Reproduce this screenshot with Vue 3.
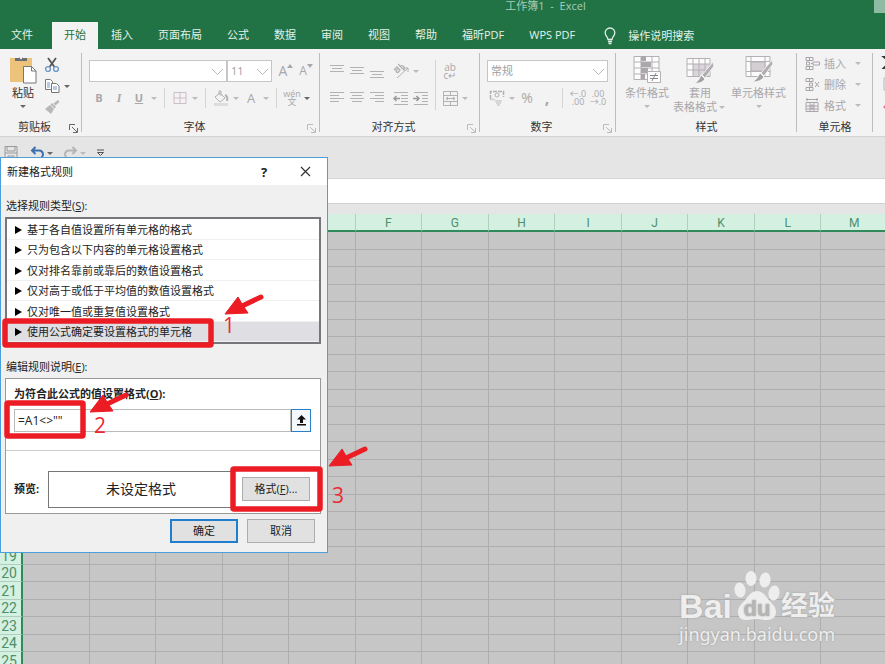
<template>
  <div class="excel">
    <header class="header">
      <div class="titlebar">
        <span class="title">工作簿1 &nbsp;- &nbsp;Excel</span>
        <span class="account"></span>
      </div>
      <nav class="tabs">
        <button
          v-for="tab in tabs"
          :key="tab"
          class="tab"
          :class="{ active: tab === activeTab, file: tab === '文件' }"
          @click="activeTab = tab"
        >{{ tab }}</button>
        <button class="tell-me">
          <svg width="12" height="18" viewBox="0 0 12 18" fill="none" stroke="#e4f1e9" stroke-width="1.3">
            <path d="M4 12.5C4 10 1.2 9.2 1.2 5.8a4.8 4.8 0 0 1 9.6 0C10.8 9.2 8 10 8 12.5zM4 14.5h4M4.5 16.5h3" />
          </svg>
          <span>操作说明搜索</span>
        </button>
      </nav>
    </header>

    <section class="ribbon">
      <div class="group clipboard">
        <div class="group-body">
          <button class="big dark">
            <svg width="28" height="29" viewBox="0 0 28 29">
              <rect x="1" y="3" width="22" height="24" fill="#edc37b" />
              <path d="M6 6V3h4a2.5 2.5 0 0 1 4 0h4v3z" fill="#6a6d74" />
              <circle cx="12" cy="3" r="1.2" fill="#f3f3f3" />
              <path d="M14.5 11.5h8l4.500 4.500v12H14.5z" fill="#fff" stroke="#777" />
              <path d="M22.5 11.5V16H27" fill="none" stroke="#777" />
            </svg>
            <span>粘贴</span>
            <i class="caret dark"></i>
          </button>
          <div class="stack">
            <button class="tool" aria-label="剪切">
              <svg width="16" height="16" viewBox="0 0 16 16" fill="none">
                <path d="M4 1l6.5 9M12 1L5.5 10" stroke="#555" stroke-width="1.8" />
                <circle cx="4" cy="12" r="2.4" stroke="#6f98c8" stroke-width="1.4" />
                <circle cx="12" cy="12" r="2.4" stroke="#6f98c8" stroke-width="1.4" />
              </svg>
            </button>
            <div class="row">
              <button class="tool" aria-label="复制">
                <svg width="16" height="16" viewBox="0 0 16 16" fill="#fff" stroke="#777">
                  <path d="M1.5 1.5h5l2 2v8h-7z" />
                  <path d="M7.5 5.5h5l2.5 2.5v6.5H7.5z" />
                  <path d="M3 5h3M3 7h3M3 9h3M9 9h4M9 11h4" stroke="#6f98c8" />
                </svg>
              </button>
              <i class="caret dark"></i>
            </div>
            <button class="tool" aria-label="格式刷">
              <svg width="16" height="16" viewBox="0 0 16 16">
                <path d="M14 1l1.5 2-4 3.500-2-2zM8 4l4 4-1.500 1.500-4-4zM6 6l4 4-3 5-6-5z" fill="#b9b7b9" />
              </svg>
            </button>
          </div>
        </div>
        <div class="group-title"><span>剪贴板</span><Launcher class="launcher on" /></div>
      </div>

      <div class="group font">
        <div class="group-body rows">
          <div class="row">
            <label class="combo family">
              <select aria-label="字体"><option></option></select>
              <svg class="chevron" width="13" height="8" viewBox="0 0 13 8"><path d="M1 1l5.5 5.500L12 1" /></svg>
            </label>
            <label class="combo size">
              <select aria-label="字号"><option>11</option></select>
              <svg class="chevron" width="13" height="8" viewBox="0 0 13 8"><path d="M1 1l5.5 5.500L12 1" /></svg>
            </label>
            <button class="tool grow">A<svg width="6" height="5" viewBox="0 0 6 5"><path d="M3 0l3 4H0z" /></svg></button>
            <button class="tool shrink">A<svg width="6" height="5" viewBox="0 0 6 5"><path d="M3 4L0 0h6z" /></svg></button>
          </div>
          <div class="row">
            <button class="tool"><b>B</b></button>
            <button class="tool italic">I</button>
            <button class="tool"><b><u>U</u></b></button>
            <i class="caret"></i>
            <i class="split"></i>
            <button class="tool" aria-label="边框">
              <svg class="line" width="14" height="14" viewBox="0 0 14 14"><path d="M1 1.5h12v11H1zM7 1v12M1 7h12" stroke="#cdbccb" /></svg>
            </button>
            <i class="caret"></i>
            <i class="split"></i>
            <button class="tool" aria-label="填充颜色">
              <svg class="line" width="16" height="16" viewBox="0 0 16 16">
                <path d="M2 7l5-4 5 5-5 4zM6 5V1h2v5" />
                <path d="M12 5q3 1 2 6" stroke-width="2" />
                <path d="M1 14.5h14" stroke="#dedcde" stroke-width="3" />
              </svg>
            </button>
            <i class="caret"></i>
            <button class="tool color">A</button>
            <i class="caret"></i>
            <i class="split"></i>
            <button class="tool pinyin"><span>wén</span><span>文</span></button>
            <i class="caret dark"></i>
          </div>
        </div>
        <div class="group-title"><span>字体</span><Launcher class="launcher" /></div>
      </div>

      <div class="group align">
        <div class="group-body">
          <div class="rows">
            <div class="row">
              <button v-for="(d, i) in vAligns" :key="i" class="tool">
                <svg class="line" width="14" height="18" viewBox="0 0 14 18"><path :d="d" /></svg>
              </button>
              <button class="tool gap" aria-label="方向">
                <svg class="line" width="16" height="16" viewBox="0 0 16 16">
                  <path d="M4 15L15 5M11 5h4v4" />
                  <path d="M1 7l3-3 3 3-2 2.500q-2 0-2-2l2-2M5 1l6 6q1-3-1-4t-3 1" stroke-width="1.3" />
                </svg>
              </button>
              <i class="caret"></i>
            </div>
            <div class="row">
              <button v-for="(d, i) in hAligns" :key="i" class="tool">
                <svg class="line" width="14" height="14" viewBox="0 0 14 14"><path :d="d" /></svg>
              </button>
              <button class="tool gap" aria-label="减少缩进">
                <svg class="line" width="16" height="14" viewBox="0 0 16 14"><path d="M1 1.5h14M8 4.5h7M8 7.5h7M8 10.5h7M1 13.5h14" /><path d="M7 7.5H1M3.5 5L1 7.5 3.5 10" stroke="#999" stroke-width="1.5" /></svg>
              </button>
              <button class="tool" aria-label="增加缩进">
                <svg class="line" width="16" height="14" viewBox="0 0 16 14"><path d="M1 1.5h14M9 4.5h6M9 7.5h6M9 10.5h6M1 13.5h14" /><path d="M0 7.5h6M3.5 5L6 7.5 3.5 10" stroke="#999" stroke-width="1.5" /></svg>
              </button>
            </div>
          </div>
          <i class="split tall"></i>
          <div class="rows">
            <button class="tool wrap"><span>ab</span><span>c↵</span></button>
            <div class="row">
              <button class="tool" aria-label="合并后居中">
                <svg class="line" width="15" height="15" viewBox="0 0 15 15"><path d="M.5.5h14v14H.5zM.5 4.5h14M.5 10.5h14M7.5 0v4M7.5 11v4M3 7.5h9M5 6L3 7.5 5 9M10 6l2 1.500L10 9" /></svg>
              </button>
              <i class="caret"></i>
            </div>
          </div>
        </div>
        <div class="group-title"><span>对齐方式</span><Launcher class="launcher" /></div>
      </div>

      <div class="group number">
        <div class="group-body rows">
          <label class="combo format">
            <select aria-label="数字格式"><option>常规</option></select>
            <svg class="chevron" width="13" height="8" viewBox="0 0 13 8"><path d="M1 1l5.5 5.500L12 1" /></svg>
          </label>
          <div class="row">
            <button class="tool" aria-label="会计数字格式">
              <svg class="line" width="16" height="16" viewBox="0 0 16 16">
                <path d="M1.5 9V1.5h13V7" stroke-dasharray="4 1" stroke-width="1.5" /><circle cx="8" cy="5" r="2" />
                <path d="M1 9.5h5M6 11h7M7 13h5M8 15h3" stroke="#d0ced0" stroke-width="1.5" />
              </svg>
            </button>
            <i class="caret"></i>
            <button class="tool percent">%</button>
            <button class="tool comma">,</button>
            <i class="split"></i>
            <button class="tool decimal"><span>←.0</span><span>.00</span></button>
            <button class="tool decimal"><span>.00</span><span>→.0</span></button>
          </div>
        </div>
        <div class="group-title"><span>数字</span><Launcher class="launcher" /></div>
      </div>

      <div class="group styles">
        <div class="group-body">
          <button class="big">
            <svg class="line" width="28" height="29" viewBox="0 0 28 29">
              <path d="M1 1.5h25v23H1zM1 7h25M1 13h25M1 19h25M8 1v24M19 1v24" fill="#fdfcfd" />
              <path d="M8 1h5v5H8zM8 7h10v5H8zM8 13h7v5H8zM8 19h4v5H8z" fill="#aaa8aa" stroke="none" />
              <path d="M14.5 16.5h13v11h-13z" fill="#fff" />
              <path d="M17 20.5h8M17 23.5h8M23 18l-4 8" stroke="#888" />
            </svg>
            <span>条件格式</span>
            <i class="caret"></i>
          </button>
          <button class="big">
            <svg class="line" width="28" height="29" viewBox="0 0 28 29">
              <path d="M1 3.5h23v18H1z" fill="#fdfcfd" />
              <path d="M7 9h17v12H7z" fill="#dad5da" stroke="none" />
              <path d="M1 9h23M1 15h23M7 3v18M13 3v18M19 3v18" />
              <path d="M27 7l1 4-9 12-3-3z" fill="#b0aeb0" stroke="#f3f3f3" />
              <path d="M15 20l4 4q-3 5-10 4 4-2 6-8z" fill="#a3a1a3" stroke="#f3f3f3" />
            </svg>
            <span>套用</span>
            <span class="with-caret">表格格式<i class="caret"></i></span>
          </button>
          <button class="big">
            <svg class="line" width="28" height="29" viewBox="0 0 28 29">
              <path d="M1 1.5h24v20H1z" fill="#fdfcfd" />
              <path d="M1 6.5h24M1 16.5h24M6 1v20M20 1v20" />
              <path d="M6 7h14v9H6z" fill="#d3cfd3" />
              <path d="M27 5l1 4-9 12-3-3z" fill="#b0aeb0" stroke="#f3f3f3" />
              <path d="M15 18l4 4q-3 5-12 5 5-2 8-9z" fill="#a3a1a3" stroke="#f3f3f3" />
            </svg>
            <span>单元格样式</span>
            <i class="caret"></i>
          </button>
        </div>
        <div class="group-title"><span>样式</span></div>
      </div>

      <div class="group cells">
        <div class="group-body">
          <button v-for="item in cellTools" :key="item.name" class="cell-tool">
            <svg class="line" width="15" height="15" viewBox="0 0 15 15"><path :d="item.icon" stroke="#a9a4a9" /></svg>
            <span>{{ item.name }}</span>
            <i class="caret"></i>
          </button>
        </div>
        <div class="group-title"><span>单元格</span></div>
      </div>

      <div class="group editing">
        <svg width="12" height="60" viewBox="0 0 12 60">
          <path d="M22 3H11l6 5-6 6h11" fill="none" stroke="#333" stroke-width="2" />
          <path d="M11 24h8v12h-8z" fill="none" stroke="#b8b4b8" />
          <path d="M10 53l5-5 5 5-5 5z" fill="#e8799c" />
        </svg>
      </div>
    </section>

    <div class="quick">
      <button class="q" aria-label="保存">
        <svg width="14" height="16" viewBox="0 0 14 16" fill="none" stroke="#999"><path d="M1 1.5h12v13H1zM3 1v5h8V1M1 8h12M4 15v-4h6v4" /></svg>
      </button>
      <button class="q undo" aria-label="撤消">
        <svg width="15" height="14" viewBox="0 0 15 14" fill="none" stroke="#3d6fae" stroke-width="2"><path d="M5.5 1L2 4.5 5.5 8M2 4.5h7q4 0 4 4.500-1 3-3 4" /></svg>
        <i class="caret dark"></i>
      </button>
      <button class="q" aria-label="恢复">
        <svg width="15" height="14" viewBox="0 0 15 14" fill="none" stroke="#b5b5b5" stroke-width="2"><path d="M9.5 1L13 4.5 9.5 8M13 4.5H6q-4 0-4 4.500 1 3 3 4" /></svg>
        <i class="caret"></i>
      </button>
      <button class="q" aria-label="自定义">
        <svg width="9" height="8" viewBox="0 0 9 8" fill="none" stroke="#555"><path d="M1 1h7" /><path d="M1.5 3.5h6l-3 3z" /></svg>
      </button>
    </div>

    <div class="formula-bar"><input type="text" aria-label="编辑栏" /></div>

    <main class="sheet">
      <table>
        <thead>
          <tr>
            <th class="corner"></th>
            <th v-for="c in columns" :key="c">{{ c }}</th>
          </tr>
        </thead>
        <tbody>
          <tr v-for="r in 25" :key="r">
            <th>{{ r }}</th>
            <td v-for="c in columns" :key="c"></td>
          </tr>
        </tbody>
      </table>
    </main>

    <div class="dialog" role="dialog" aria-labelledby="dlg-title">
      <div class="dialog-head">
        <span id="dlg-title">新建格式规则</span>
        <button class="help">?</button>
        <button class="close" aria-label="关闭">
          <svg width="11" height="11" viewBox="0 0 11 11"><path d="M1 1l9 9M10 1l-9 9" stroke="#333" stroke-width="1.2" /></svg>
        </button>
      </div>
      <div class="dialog-body">
        <p id="type-label" class="label">选择规则类型(<u>S</u>):</p>
        <ul class="rules" role="listbox" aria-labelledby="type-label">
          <li
            v-for="(rule, i) in rules"
            :key="rule"
            role="option"
            :aria-selected="i === selected"
            :class="{ selected: i === selected }"
            @click="selected = i"
          >
            <svg width="8" height="8" viewBox="0 0 8 8"><path d="M0 0l7 4-7 4z" /></svg>
            <span>{{ rule }}</span>
          </li>
        </ul>
        <p class="label">编辑规则说明(<u>E</u>):</p>
        <div class="panel">
          <div class="panel-top">
            <label for="formula">为符合此公式的值设置格式(<u>O</u>):</label>
            <div class="formula">
              <input id="formula" v-model="formula" type="text" />
              <button class="pick" aria-label="选择区域">
                <svg width="9" height="11" viewBox="0 0 9 11"><path d="M4.5 0L9 4.5H6V8H3V4.5H0zM0 9h9v1.5H0z" fill="#111" /></svg>
              </button>
            </div>
          </div>
          <div class="panel-bottom">
            <b>预览:</b>
            <div class="preview">未设定格式</div>
            <button class="btn">格式(<u>F</u>)...</button>
          </div>
        </div>
        <div class="actions">
          <button class="btn primary">确定</button>
          <button class="btn">取消</button>
        </div>
      </div>
    </div>

    <!-- 操作步骤标注 -->
    <svg class="marks" width="400" height="560" viewBox="0 0 400 560">
      <g v-for="m in marks" :key="m.n">
        <rect :x="m.x" :y="m.y" :width="m.w" :height="m.h" rx="1" fill="none" stroke="#ec1c24" stroke-width="5.5" />
        <g :transform="`translate(${m.ax} ${m.ay})`">
          <path d="M0 0L13-17L17-10L23-1Z" fill="#ec1c24" stroke="#ec1c24" stroke-linejoin="round" />
          <path d="M15-7L36-17" stroke="#ec1c24" stroke-width="5" stroke-linecap="round" />
        </g>
        <text :x="m.tx" :y="m.ty">{{ m.n }}</text>
      </g>
    </svg>

    <div class="watermark">
      <div class="brand">
        <span class="bai">Bai</span>
        <svg width="46" height="52" viewBox="0 0 46 52">
          <g fill="#eee">
            <ellipse cx="6" cy="20" rx="5.5" ry="7.5" transform="rotate(-8 6 20)" />
            <ellipse cx="17" cy="8.5" rx="5.5" ry="7.5" />
            <ellipse cx="31" cy="10" rx="5.5" ry="7.5" transform="rotate(8 31 10)" />
            <ellipse cx="40" cy="23" rx="5.5" ry="7.5" transform="rotate(8 40 23)" />
            <path d="M23 21c5 0 8 4 11 8s8 7 8 13c0 5-4 8-9 8s-7-1-11-1-6 1-10 1c-5 0-8-3-8-8 0-6 5-9 8-13s6-8 11-8z" />
          </g>
          <text x="23" y="46" text-anchor="middle">du</text>
        </svg>
        <span class="jy">经验</span>
      </div>
      <div class="site">jingyan.baidu.com</div>
    </div>
  </div>
</template>

<script setup>
import { ref, h } from 'vue'

const tabs = ['文件', '开始', '插入', '页面布局', '公式', '数据', '审阅', '视图', '帮助', '福昕PDF', 'WPS PDF']
const activeTab = ref('开始')

// 功能区分组右下角的小箭头
const Launcher = () =>
  h('svg', { width: 9, height: 9, viewBox: '0 0 9 9', fill: 'none', stroke: 'currentColor' }, [
    h('path', { d: 'M.5 6V.5H6M3 3l5 5M8.5 4v4.5H4' }),
  ])

const vAligns = ['M0 3.5h14M2 6.5h10M0 9.5h14', 'M0 5.5h14M2 8.5h10M0 11.5h14', 'M0 9.5h14M2 12.5h10M0 15.5h14']
const hAligns = [
  'M0 1.5h14M0 4.5h9M0 7.5h14M0 10.5h9',
  'M0 1.5h14M2 4.5h10M0 7.5h14M2 10.5h10',
  'M0 1.5h14M5 4.5h9M0 7.5h14M5 10.5h9',
]

const cellTools = [
  { name: '插入', icon: 'M1 1.5h7v3H1zM4.5 1v3M1 10.5h7v3H1zM4.5 10v4M1.5 6h3v3h-3zM14.5 6v3H8V6zM6 7.5h2' },
  { name: '删除', icon: 'M1 1.5h7v3H1zM4.5 1v3M1 10.5h7v3H1zM4.5 10v4M4.5 6h3v3h-3zM10 5l4 5M14 5l-4 5' },
  { name: '格式', icon: 'M1 1.5h12M2 0v3M12 0v3M1 4.5h12v9H1zM1 8h12M1 11h12M5 4v9M9 4v9M6 7h2v4H6z' },
]

const columns = 'ABCDEFGHIJKLM'.split('')

const rules = [
  '基于各自值设置所有单元格的格式',
  '只为包含以下内容的单元格设置格式',
  '仅对排名靠前或靠后的数值设置格式',
  '仅对高于或低于平均值的数值设置格式',
  '仅对唯一值或重复值设置格式',
  '使用公式确定要设置格式的单元格',
]
const selected = ref(5)
const formula = ref('=A1<>""')

const marks = [
  { n: 1, x: 5, y: 321, w: 206, h: 24, ax: 225, ay: 314, tx: 223, ty: 333 },
  { n: 2, x: 7, y: 403, w: 76, h: 33, ax: 90, ay: 412, tx: 94, ty: 433 },
  { n: 3, x: 233, y: 469, w: 87, h: 40, ax: 329, ay: 466, tx: 332, ty: 503 },
]
</script>

<style>
body {
  margin: 0;
  overflow: hidden;
}
</style>

<style scoped>
.excel {
  position: relative;
  display: flex;
  flex-direction: column;
  height: 100vh;
  overflow: hidden;
  background: #e5e5e5;
  color: #333;
  font: 11px/16px "Open Sans", "Noto Sans CJK SC", sans-serif;
}

button {
  margin: 0;
  padding: 0;
  border: 0;
  background: none;
  color: inherit;
  font: inherit;
}

.header {
  background: #217346;
  color: #e4f1e9;
}

.titlebar {
  display: flex;
  height: 22px;
  line-height: 12px;
}

.title {
  flex: 1;
  padding-left: 217px;
  text-align: center;
  color: #a9ccb8;
}

.account {
  width: 11px;
  height: 13px;
  background: #8fbba2;
}

.tabs {
  display: flex;
  gap: 1px;
  height: 27px;
}

.tab {
  padding: 0 12px 2px;
  white-space: nowrap;
}

.tab.file {
  margin-right: 6px;
  padding-left: 11px;
}

.tab.active {
  background: #f3f3f3;
  color: #217346;
}

.tell-me {
  display: flex;
  align-items: center;
  gap: 12px;
  margin-left: 16px;
}

.ribbon {
  display: flex;
  height: 88px;
  background: #f3f3f3;
  border-bottom: 1px solid #d2d2d2;
  box-sizing: border-box;
  overflow: hidden;
  color: #a9a7a9;
}

.group {
  position: relative;
  display: flex;
  flex-direction: column;
  flex: none;
  box-sizing: border-box;
}

.group::after {
  content: "";
  position: absolute;
  right: 0;
  top: 4px;
  bottom: 4px;
  width: 1px;
  background: #bdbdbd;
}

.clipboard { width: 82px; }
.font { width: 238px; }
.align { width: 160px; }
.number { width: 136px; }
.styles { width: 181px; }
.cells { width: 76px; }

.editing {
  width: 12px;
  padding-top: 5px;
}

.editing::after {
  display: none;
}

.group-body {
  display: flex;
  flex: 1;
}

.group-body.rows,
.align .group-body,
.number .group-body {
  padding: 11px 0 0 7px;
}

.rows {
  display: flex;
  flex-direction: column;
  gap: 5px;
}

.row {
  display: flex;
  align-items: center;
  height: 22px;
}

.group-title {
  display: flex;
  align-items: center;
  height: 20px;
  color: #333;
}

.group-title span {
  flex: 1;
  padding-top: 1px;
  text-align: center;
}

.launcher {
  margin: 4px 4px 0 0;
  color: #bbb;
}

.launcher.on {
  color: #666;
}

.tool {
  display: flex;
  align-items: center;
  justify-content: center;
  width: 20px;
  height: 20px;
}

.tool.gap {
  margin-left: 4px;
}

.italic {
  font: italic bold 12px "Liberation Serif", serif;
}

.line {
  fill: none;
  stroke: #b4b0b4;
}

.caret {
  flex: none;
  width: 0;
  margin: 0 2px;
  border: 3px solid transparent;
  border-top-color: #bbb;
  border-bottom: 0;
}

.caret.dark {
  border-top-color: #666;
}

.split {
  width: 1px;
  height: 20px;
  margin: 0 5px;
  background: #d4d4d4;
}

.split.tall {
  height: 50px;
  margin: 0 4px;
}

.clipboard .group-body {
  padding: 6px 0 0 8px;
  gap: 4px;
}

.stack {
  display: flex;
  flex-direction: column;
}

.stack .row {
  height: 22px;
}

.big {
  display: flex;
  flex-direction: column;
  align-items: center;
  line-height: 14px;
}

.big.dark {
  width: 30px;
  color: #333;
}

.big > span:first-of-type {
  margin-top: 2px;
  white-space: nowrap;
}

.big > .caret {
  margin-top: 5px;
}

.with-caret {
  display: flex;
  align-items: center;
  white-space: nowrap;
}

.combo {
  position: relative;
  display: block;
  height: 22px;
}

.combo select {
  width: 100%;
  height: 22px;
  padding: 0 3px;
  border: 1px solid #c6c6c6;
  border-radius: 0;
  background: #fff;
  appearance: none;
  color: #a0a0a0;
  font: inherit;
}

.family { width: 138px; }
.size { width: 45px; margin-right: 4px; }
.format { width: 121px; }

.chevron {
  position: absolute;
  right: 3px;
  top: 8px;
  fill: none;
  stroke: #bbb;
}

.grow,
.shrink {
  font-size: 14px;
}

.shrink {
  font-size: 12px;
}

.grow svg,
.shrink svg {
  margin-bottom: 10px;
  fill: #a9a7a9;
}

.color {
  font-size: 13px;
}

.pinyin,
.wrap,
.decimal {
  flex-direction: column;
  font-size: 9px;
  line-height: 8px;
}

.wrap {
  height: 22px;
  font-size: 10px;
}

.percent {
  font-size: 14px;
}

.comma {
  font-size: 16px;
  font-weight: bold;
  line-height: 10px;
}

.styles .group-body {
  gap: 4px;
  padding: 6px 0 0 9px;
}

.cells .group-body {
  flex-direction: column;
  padding: 4px 0 0 8px;
}

.cell-tool {
  display: flex;
  align-items: center;
  height: 21px;
}

.cell-tool span {
  margin: 0 7px 0 4px;
}

.quick {
  display: flex;
  align-items: flex-start;
  gap: 8px;
  height: 33px;
  padding: 8px 4px 0;
}

.q {
  display: flex;
  align-items: center;
  height: 16px;
}

.undo {
  margin-left: 4px;
}

.formula-bar {
  height: 24px;
  margin-bottom: 10px;
  border-top: 1px solid #d5d5d5;
  border-bottom: 1px solid #d0d0d0;
}

.formula-bar input {
  display: block;
  width: 100%;
  height: 24px;
  padding: 0;
  border: 0;
  background: #fff;
}

.sheet {
  flex: 1;
  min-height: 0;
}

table {
  width: calc(100% + 3px);
  height: calc(100% + 6px);
  table-layout: fixed;
  border-collapse: separate;
  border-spacing: 0;
}

th,
td {
  box-sizing: border-box;
  padding: 0;
  overflow: hidden;
}

tbody tr {
  height: 4%;
}

td {
  border-right: 1px solid #aeaeae;
  border-bottom: 1px solid #aeaeae;
  background: #c6c6c6;
}

th {
  background: #d3f0e0;
  font: 14px/15px Roboto, "Liberation Sans", sans-serif;
  color: #4e8f6c;
}

thead th {
  height: 18px;
  padding-top: 2px;
  border-right: 1px solid #b0cfbe;
  border-bottom: 2px solid #2f8a5c;
  font-size: 12px;
  line-height: 14px;
}

thead .corner {
  width: 23px;
}

tbody th {
  padding: 1px 3px 0 0;
  border-right: 2px solid #2f8a5c;
  border-bottom: 1px solid #b0cfbe;
}

.dialog {
  position: absolute;
  left: 0;
  top: 157px;
  width: 328px;
  box-sizing: border-box;
  border: 1px solid #4d9fdc;
  background: #f0f0f0;
  color: #222;
}

.dialog-head {
  display: flex;
  align-items: center;
  height: 27px;
  padding: 0 16px 0 6px;
  background: #fff;
}

.dialog-head span {
  flex: 1;
}

.help {
  width: 12px;
  margin-right: 30px;
  font-size: 13px;
  font-weight: bold;
}

.close {
  display: flex;
}

.dialog-body {
  padding: 13px 6px 9px 4px;
}

.label {
  margin: 0;
  padding-left: 1px;
}

.rules {
  display: grid;
  grid-template-rows: repeat(6, 1fr);
  height: 127px;
  margin: 3px 0 15px;
  padding: 0;
  box-sizing: border-box;
  border: 2px solid #77777b;
  background: #fff;
  list-style: none;
}

.rules li {
  display: flex;
  align-items: center;
  gap: 4px;
  padding: 2px 0 0 8px;
  border-bottom: 1px solid #f0f0f0;
}

.rules .selected {
  background: #dfdee3;
}

.panel {
  margin: 3px 0 5px;
  border: 1px solid #999;
  background: #fff;
}

.panel-top {
  height: 72px;
  padding: 7px 9px 0 8px;
  box-sizing: border-box;
  border-bottom: 1px solid #ccc;
}

.panel-top label,
.panel-bottom b {
  font-weight: bold;
}

.formula {
  display: flex;
  margin-top: 7px;
}

.formula input {
  flex: 1;
  min-width: 0;
  height: 23px;
  box-sizing: border-box;
  padding: 0 3px;
  border: 1px solid #bbb;
  font: inherit;
  font-size: 12px;
  color: #222;
}

.pick {
  display: flex;
  align-items: center;
  justify-content: center;
  width: 20px;
  border: 1px solid #2a80c8;
  background: #f4f8fc;
}

.panel-bottom {
  display: flex;
  align-items: center;
  height: 62px;
  padding: 14px 10px 0 8px;
  box-sizing: border-box;
}

.panel-bottom b {
  width: 34px;
}

.preview {
  flex: 1;
  height: 37px;
  margin-right: 8px;
  box-sizing: border-box;
  border: 1px solid #777;
  font-size: 14px;
  line-height: 34px;
  text-align: center;
}

.btn {
  width: 68px;
  height: 24px;
  border: 1px solid #adadad;
  background: #e1e1e1;
}

.btn.primary {
  border: 2px solid #1f7fce;
}

.actions {
  display: flex;
  justify-content: flex-end;
  gap: 9px;
  padding-right: 6px;
}

.marks {
  position: absolute;
  left: 0;
  top: 0;
  pointer-events: none;
}

.marks text {
  fill: #ec2a32;
  font-size: 21px;
}

.watermark {
  position: absolute;
  right: 50px;
  bottom: 18px;
  color: #eee;
  text-shadow: 0 0 2px #999;
  pointer-events: none;
}

.brand {
  display: flex;
  align-items: flex-end;
  justify-content: space-between;
  height: 50px;
}

.bai {
  font: bold 34px/32px "Liberation Sans", sans-serif;
}

.brand text {
  fill: #b5b5b5;
  font: bold 22px "Liberation Sans", sans-serif;
}

.jy {
  font-size: 27px;
  font-weight: bold;
  line-height: 34px;
}

.site {
  font: 18px/24px "Noto Sans", sans-serif;
}
</style>
